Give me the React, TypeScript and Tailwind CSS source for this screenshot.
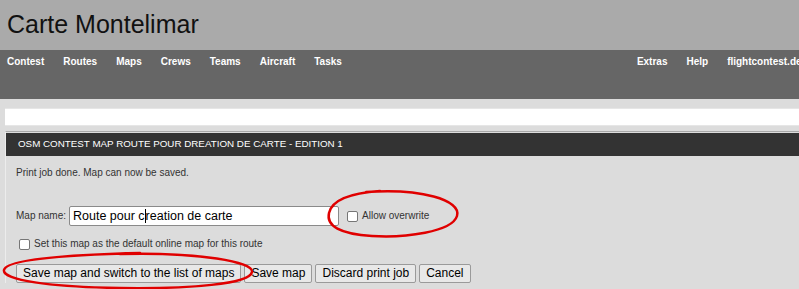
import React from 'react';

const leftMenu = ['Contest', 'Routes', 'Maps', 'Crews', 'Teams', 'Aircraft', 'Tasks'];
const rightMenu = ['Extras', 'Help', 'flightcontest.de'];

const Btn: React.FC<{ label: string }> = ({ label }) => (
  <button className="h-[19px] px-[6px] border border-[#9a9a9a] rounded-[2px] bg-[#e8e8e8] text-[12px] leading-[17px] text-black whitespace-nowrap">
    {label}
  </button>
);

const App: React.FC = () => {
  return (
    <div
      className="relative w-[799px] h-[289px] overflow-hidden bg-[#dcdcdc]"
      style={{ fontFamily: '"Liberation Sans", Arial, sans-serif' }}
    >
      {/* title */}
      <div className="h-[50px] bg-[#aaaaaa] pl-[7px] pt-[9px]">
        <h1 className="text-[25px] leading-[30px] text-[#111] whitespace-nowrap">Carte Montelimar</h1>
      </div>

      {/* main menu */}
      <div className="h-[49px] bg-[#666666] pl-[7px] pt-[6px] flex text-[10px] font-bold text-white leading-[12px] whitespace-nowrap">
        <div className="flex gap-[19px]">
          {leftMenu.map((m) => (
            <span key={m}>{m}</span>
          ))}
        </div>
        <div className="flex gap-[19px] ml-[295px] shrink-0">
          {rightMenu.map((m) => (
            <span key={m}>{m}</span>
          ))}
        </div>
      </div>

      <div className="pl-[5px] pt-[9px] w-[820px]">
        <div className="h-[18px] bg-white border-y border-[#e6e6e6]" />

        <div className="mt-[5px] border-t border-[#a8a8a8] border-l border-l-[#ececec]">
          <div className="mt-[1px] h-[23px] bg-[#333333] pl-[12px] flex items-center text-[9.8px] text-white whitespace-nowrap">
            OSM CONTEST MAP ROUTE POUR DREATION DE CARTE - EDITION 1
          </div>

          <div className="pl-[10px] text-[10px] text-[#333]">
            <p className="mt-[11px] leading-[12px]">Print job done. Map can now be saved.</p>

            <div className="mt-[27px] flex items-center h-[20px]">
              <span className="leading-[12px]">Map name:</span>
              <div className="ml-[3px] w-[270px] h-[20px] bg-white border border-[#8a8a8a] rounded-[2px] pl-[3px] flex items-center text-[12.5px] text-black whitespace-nowrap">
                Route pour c
                <span className="inline-block w-[1px] h-[14px] bg-black" />
                reation de carte
              </div>
              <span className="ml-[8px] w-[11px] h-[11px] border border-[#767676] rounded-[2px] bg-white" />
              <span className="ml-[4px] leading-[12px]">Allow overwrite</span>
            </div>

            <div className="mt-[12px] ml-[3px] flex items-center h-[12px]">
              <span className="w-[11px] h-[11px] border border-[#767676] rounded-[2px] bg-white" />
              <span className="ml-[4px] leading-[12px]">Set this map as the default online map for this route</span>
            </div>

            <div className="mt-[14px] flex gap-[3px]">
              <Btn label="Save map and switch to the list of maps" />
              <Btn label="Save map" />
              <Btn label="Discard print job" />
              <Btn label="Cancel" />
            </div>
          </div>
        </div>
      </div>

      {/* red hand-drawn marks */}
      <svg className="absolute inset-0 pointer-events-none" width="799" height="289" viewBox="0 0 799 289">
        <path
          d="M366 192 C 420 188, 462 200, 457 216 C 452 232, 405 238, 372 236 C 340 234, 326 226, 329 213 C 332 200, 350 193, 380 191"
          fill="none"
          stroke="#e00000"
          strokeWidth="2.5"
          strokeLinecap="round"
        />
        <path
          d="M120 254 C 200 252, 254 262, 252 272 C 250 284, 190 289, 120 288 C 50 287, 2 280, 4 270 C 6 260, 60 255, 140 253"
          fill="none"
          stroke="#e00000"
          strokeWidth="2.5"
          strokeLinecap="round"
        />
      </svg>
    </div>
  );
};

export default App;
